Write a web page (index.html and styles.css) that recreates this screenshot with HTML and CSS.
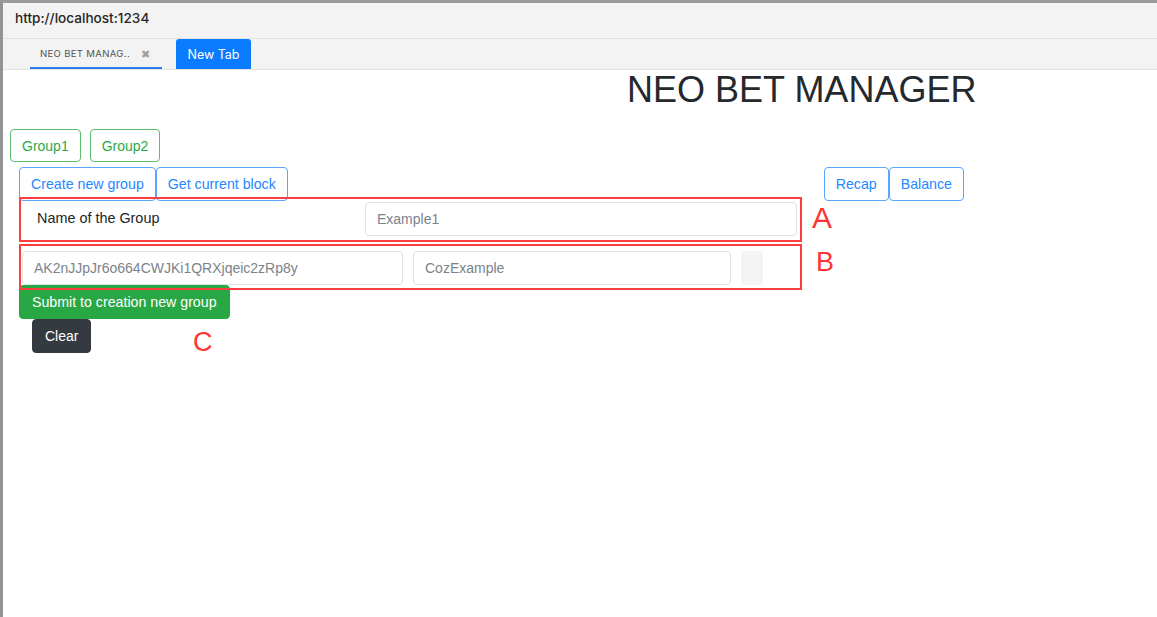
FILE: index.html
```html
<!DOCTYPE html>
<html>
<head>
<meta charset="utf-8">
<title>NEO BET MANAGER</title>
<link rel="stylesheet" href="styles.css">
</head>
<body>
<div class="window">
  <div class="addressbar">http://localhost:1234</div>
  <div class="tabbar">
    <div class="tab tab-active"><span class="tab-title">NEO BET MANAG..</span><span class="tab-close">✖</span></div>
    <div class="tab tab-new">New Tab</div>
  </div>
  <main class="page">
    <h1 class="title">NEO BET MANAGER</h1>
    <div class="groups">
      <button class="btn btn-green">Group1</button>
      <button class="btn btn-green">Group2</button>
    </div>
    <div class="actions">
      <div class="btn-group">
        <button class="btn btn-blue">Create new group</button>
        <button class="btn btn-blue">Get current block</button>
      </div>
      <div class="btn-group">
        <button class="btn btn-blue">Recap</button>
        <button class="btn btn-blue">Balance</button>
      </div>
    </div>
    <div class="form">
      <div class="row-a">
        <label class="label">Name of the Group</label>
        <input class="input input-name" placeholder="Example1">
      </div>
      <div class="row-b">
        <input class="input input-addr" placeholder="AK2nJJpJr6o664CWJKi1QRXjqeic2zRp8y">
        <input class="input input-cause" placeholder="CozExample">
        <span class="tiny"></span>
      </div>
      <button class="btn btn-submit">Submit to creation new group</button>
      <button class="btn btn-clear">Clear</button>
      <div class="annot box-a"></div>
      <div class="annot box-b"></div>
      <div class="letter letter-a">A</div>
      <div class="letter letter-b">B</div>
      <div class="letter letter-c">C</div>
    </div>
  </main>
</div>
</body>
</html>
```

FILE: styles.css
```css
html, body {
  margin: 0;
  padding: 0;
  background: #fff;
}
body {
  font-family: "Liberation Sans", Arial, sans-serif;
  color: #212529;
}
.window {
  height: 617px;
  box-sizing: border-box;
  border-top: 3px solid #9b9b9b;
  border-left: 3px solid #939393;
  overflow: hidden;
  background: #fff;
}
.addressbar {
  height: 36px;
  box-sizing: border-box;
  padding: 7px 0 0 12px;
  background: #f3f3f3;
  border-bottom: 1px solid #e2e2e2;
  font-family: Inter, Roboto, "Liberation Sans", sans-serif;
  font-weight: 500;
  font-size: 13.6px;
  line-height: 16px;
  color: #262626;
}
.tabbar {
  height: 31px;
  box-sizing: border-box;
  display: flex;
  align-items: stretch;
  gap: 14px;
  padding-left: 27px;
  background: #f3f3f3;
  border-bottom: 1px solid #e4e4e4;
}
.tab {
  display: flex;
  align-items: center;
  box-sizing: border-box;
}
.tab-active {
  width: 132px;
  padding: 1px 12px 0 10px;
  justify-content: space-between;
  border-bottom: 2px solid #2a7ef0;
  font-family: Inter, Roboto, "Liberation Sans", sans-serif;
  font-size: 9.6px;
  color: #555;
  letter-spacing: 0.3px;
}
.tab-close {
  font-size: 11px;
  color: #a0a0a0;
}
.tab-new {
  width: 75px;
  justify-content: center;
  background: #0b7cff;
  color: #fff;
  border-radius: 3px 3px 0 0;
  font-family: Inter, Roboto, "Liberation Sans", sans-serif;
  font-size: 12.5px;
}
.page {
  display: flex;
  flex-direction: column;
  align-items: flex-start;
}
.title {
  margin: 0 0 0 624px;
  font-size: 36px;
  line-height: 40px;
  font-weight: 400;
  color: #25292d;
}
.btn {
  display: inline-flex;
  align-items: center;
  justify-content: center;
  box-sizing: border-box;
  margin: 0;
  font-family: "Liberation Sans", Arial, sans-serif;
  background: #fff;
  border-radius: 4px;
  cursor: pointer;
}
.groups {
  display: flex;
  gap: 9px;
  margin: 19px 0 0 7px;
}
.btn-green {
  height: 33px;
  padding: 0 11px;
  font-size: 14px;
  color: #2ea84a;
  border: 1px solid #5cbc70;
}
.actions {
  display: flex;
  justify-content: space-between;
  width: 945px;
  margin: 5px 0 0 16px;
}
.btn-group {
  display: flex;
}
.btn-blue {
  height: 34px;
  padding: 0 11px;
  font-size: 14.2px;
  color: #2588ff;
  border: 1px solid #5aa6ff;
}
.form {
  position: relative;
  display: flex;
  flex-direction: column;
  align-items: flex-start;
  width: 783px;
  margin: 1px 0 0 16px;
}
.row-a {
  display: flex;
  align-items: center;
  box-sizing: border-box;
  width: 783px;
  padding: 0 5px 0 18px;
}
.label {
  flex: 1;
  font-size: 14.4px;
  margin-top: -3px;
  color: #212529;
}
.input {
  box-sizing: border-box;
  height: 34px;
  margin: 0;
  padding: 0 11px;
  border: 1px solid #dde2e6;
  border-radius: 4px;
  font-family: "Liberation Sans", Arial, sans-serif;
  font-size: 14px;
  color: #495057;
  background: #fff;
  outline: none;
}
.input::placeholder {
  color: #7b838b;
}
.input-name {
  width: 432px;
}
.row-b {
  display: flex;
  gap: 10px;
  margin-top: 15px;
  padding-left: 3px;
}
.input-addr {
  width: 381px;
}
.input-cause {
  width: 318px;
}
.tiny {
  width: 22px;
  height: 34px;
  border-radius: 4px;
  background: #f3f4f6;
}
.btn-submit {
  height: 34px;
  padding: 0 12px;
  font-size: 14.2px;
  color: #fff;
  background: #28a745;
  border: 1px solid #28a745;
}
.btn-clear {
  height: 34px;
  margin-left: 13px;
  padding: 0 12px;
  font-size: 14px;
  color: #fff;
  background: #343a40;
  border: 1px solid #343a40;
}
.annot {
  position: absolute;
  left: 0;
  width: 783px;
  box-sizing: border-box;
  border: 2px solid #ff3f3f;
  pointer-events: none;
}
.box-a {
  top: -5px;
  height: 45px;
}
.box-b {
  top: 42px;
  height: 46px;
}
.letter {
  position: absolute;
  color: #ff3434;
  line-height: 1;
  font-family: "Liberation Sans", Arial, sans-serif;
}
.letter-a {
  left: 793px;
  top: 1px;
  font-size: 30px;
}
.letter-b {
  left: 797px;
  top: 47px;
  font-size: 27px;
}
.letter-c {
  left: 174px;
  top: 127px;
  font-size: 27px;
}
```
